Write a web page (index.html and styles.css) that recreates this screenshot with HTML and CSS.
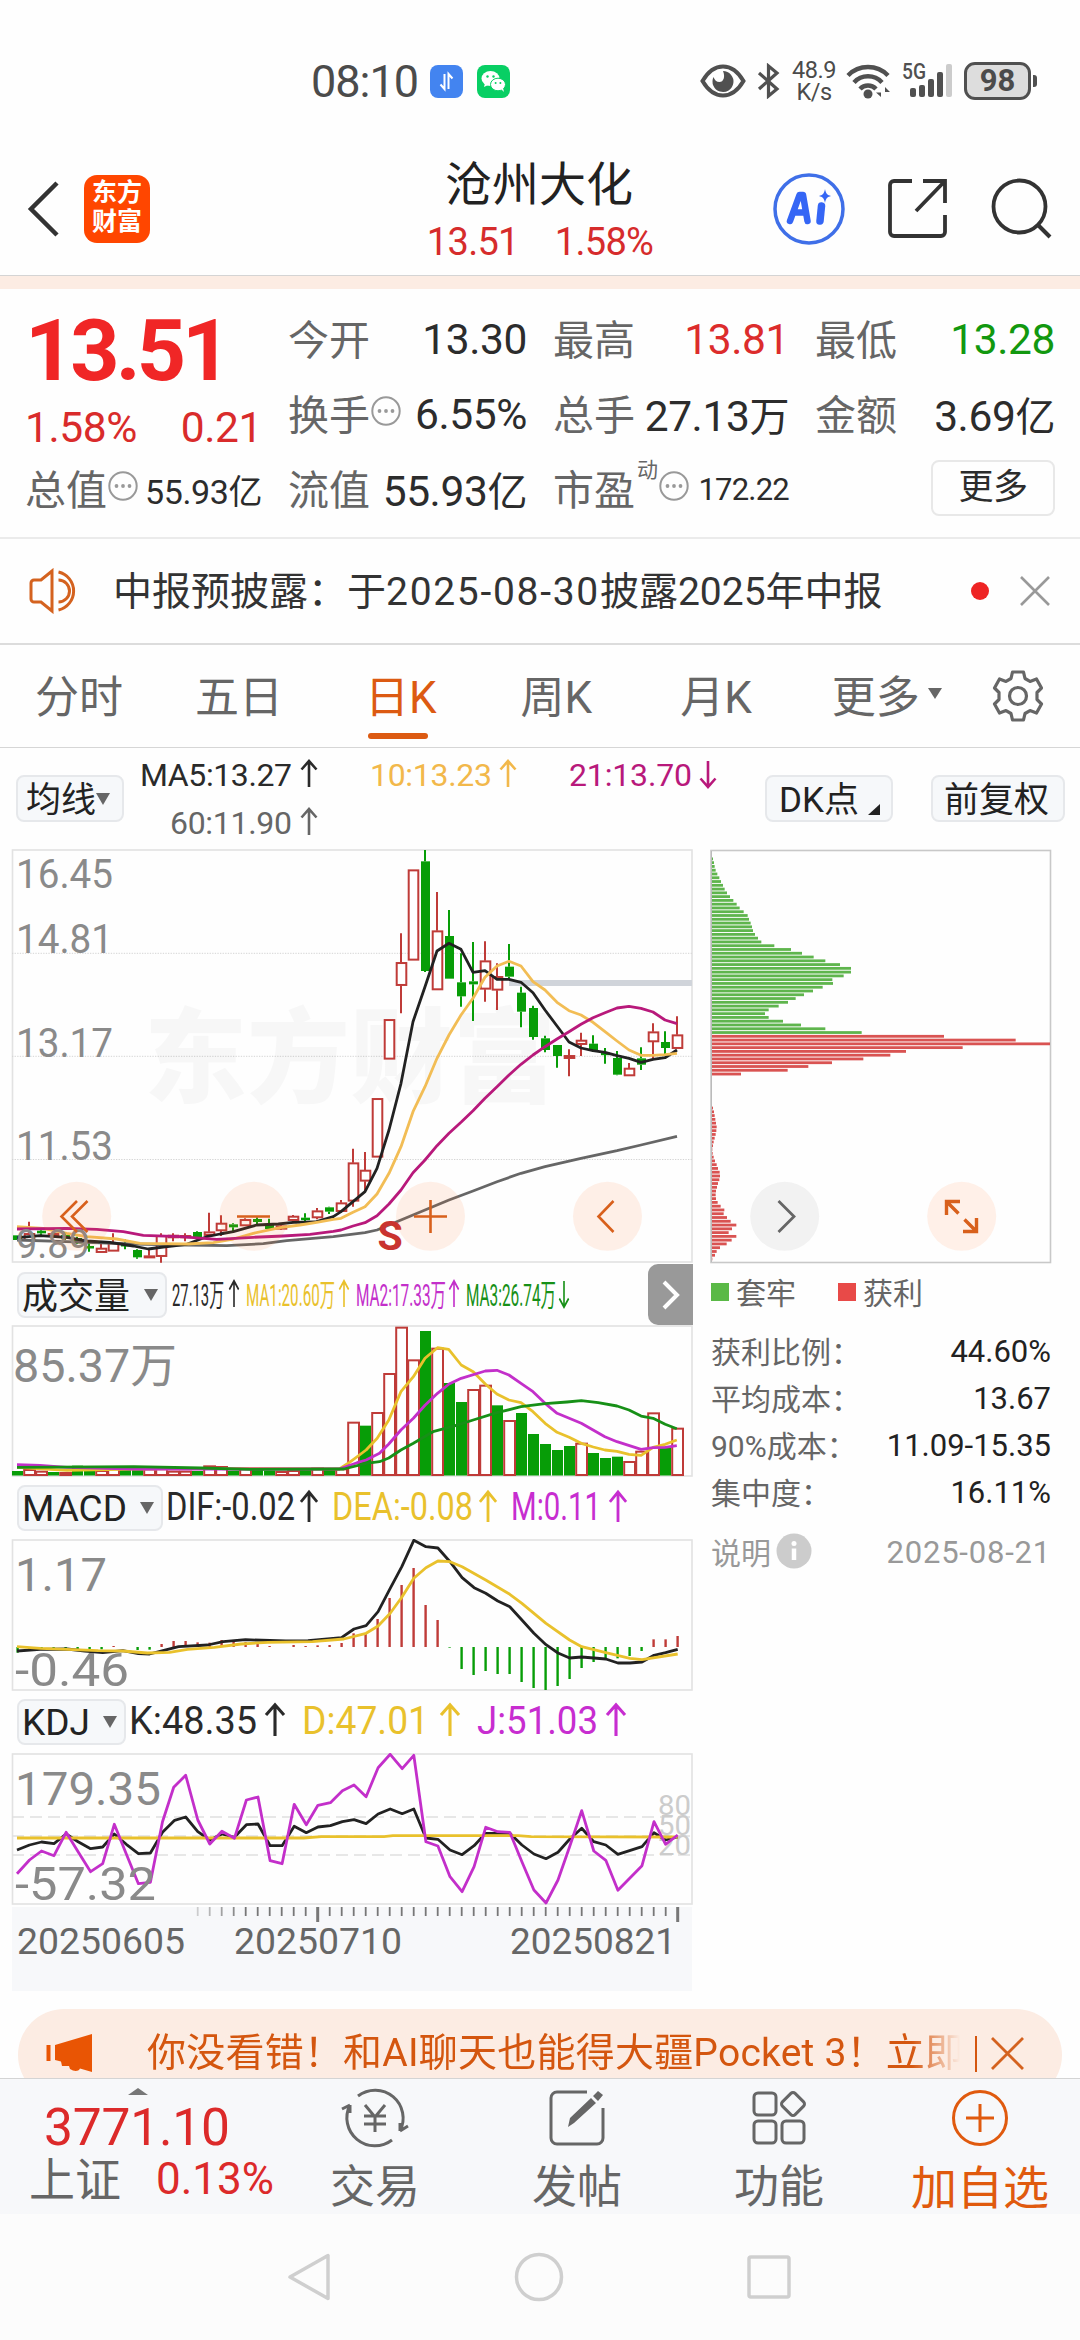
FILE: index.html
```html
<!DOCTYPE html>
<html lang="zh-CN">
<head>
<meta charset="utf-8">
<title>沧州大化</title>
<link rel="stylesheet" href="styles.css">
</head>
<body>
<svg class="defs" width="0" height="0">
  <defs>
    <path id="up" d="M0 0V-26M-7.5 -17.5L0 -26L7.5 -17.5" fill="none" stroke-width="2.6"/>
    <path id="down" d="M0 -26V0M-7.5 -8.5L0 0L7.5 -8.5" fill="none" stroke-width="2.6"/>
    <g id="dots"><circle cx="15" cy="15" r="13.7" fill="none" stroke="#999" stroke-width="2"/><circle cx="8.5" cy="15" r="1.9" fill="#999"/><circle cx="15" cy="15" r="1.9" fill="#999"/><circle cx="21.5" cy="15" r="1.9" fill="#999"/></g>
  </defs>
</svg>

<div class="status">
  <span class="clock">08:10</span>
  <svg class="app" width="33" height="33" viewBox="0 0 33 33"><rect width="33" height="33" rx="8" fill="#4384f0"/><path d="M14.5 9v15l-4-4.5M18.5 24V9l4 4.5" fill="none" stroke="#fff" stroke-width="2"/></svg>
  <svg class="app2" width="33" height="33" viewBox="0 0 33 33"><rect width="33" height="33" rx="8" fill="#08cf64"/><ellipse cx="13.5" cy="13.5" rx="9" ry="7.5" fill="#fff"/><path d="M8 18l-1 4 4-2z" fill="#fff"/><ellipse cx="21" cy="19.5" rx="7.5" ry="6.3" fill="#fff" stroke="#08cf64"/><path d="M24 24l3 3-1-4z" fill="#fff"/><circle cx="10.5" cy="11.5" r="1.2" fill="#08cf64"/><circle cx="16.5" cy="11.5" r="1.2" fill="#08cf64"/><circle cx="18.6" cy="18" r="1" fill="#08cf64"/><circle cx="23.4" cy="18" r="1" fill="#08cf64"/></svg>
  <span class="grow"></span>
  <svg width="46" height="34" viewBox="0 0 46 34"><path d="M2.5 17C9 6 16 2.5 23 2.5S37 6 43.5 17C37 28 30 31.5 23 31.5S9 28 2.5 17z" fill="none" stroke="#505050" stroke-width="4"/><path d="M23 7a10.5 10.5 0 1 1-9.5 6c1 3 3 5 6 5 4 0 6-5 3.500-11z" fill="#505050"/></svg>
  <svg class="bt" width="24" height="36" viewBox="0 0 24 36"><path d="M2 10L20 26L11.500 33V3L20 10L2 26" fill="none" stroke="#505050" stroke-width="3.200"/></svg>
  <span class="rate">48.9<br>K/s</span>
  <svg class="wifi" width="46" height="36" viewBox="0 0 46 36"><g fill="none" stroke="#505050" stroke-width="4.500"><path d="M2 12.500a28 28 0 0 1 40 0"/><path d="M8 19.500a19 19 0 0 1 28 0"/><path d="M14 26a11 11 0 0 1 16 0"/></g><circle cx="22" cy="31" r="4.500" fill="#505050"/><path d="M35 24v10l-5-4.500h5M39 34V24l5 5h-5" fill="#505050"/></svg>
  <svg class="sig" width="52" height="36" viewBox="0 0 52 36"><text x="0" y="16" font-size="22" textLength="24" lengthAdjust="spacingAndGlyphs" fill="#505050" font-weight="500">5G</text><g fill="#505050"><rect x="8" y="25" width="6" height="9" rx="2"/><rect x="17" y="22" width="6" height="12" rx="2"/><rect x="26" y="16" width="6" height="18" rx="2"/><rect x="35" y="9" width="6" height="25" rx="2"/><rect x="44" y="1" width="6" height="33" rx="2" fill="#ccc"/></g></svg>
  <span class="battery">98</span><i class="nub"></i>
</div>

<header class="header">
  <svg class="back" width="34" height="58" viewBox="0 0 34 58"><path d="M30 3L4 29L30 55" fill="none" stroke="#333" stroke-width="4.500"/></svg>
  <div class="logo">东方<br>财富</div>
  <div class="title"><div class="name">沧州大化</div><div class="sub"><span>13.51</span><span>1.58%</span></div></div>
  <svg width="72" height="72" viewBox="0 0 72 72"><circle cx="36" cy="36" r="34" fill="none" stroke="#3f6fe8" stroke-width="3.500"/><path d="M17 48L26.500 22H30L34.500 48M21 39.500H32" fill="none" stroke="#3566f5" stroke-width="6.500" stroke-linejoin="round" stroke-linecap="round"/><path d="M48.500 33L47 48" stroke="#3566f5" stroke-width="7.500" stroke-linecap="round"/><path d="M52 16c1 5 2.500 6 6 7c-3.500 1-5 2-6 7c-1-5-2.500-6-6-7c3.500-1 5-2 6-7z" fill="#3566f5"/></svg>
  <svg class="share" width="62" height="62" viewBox="0 0 62 62"><g fill="none" stroke="#333" stroke-width="3.800"><path d="M25 3H7a4 4 0 0 0-4 4V54a4 4 0 0 0 4 4H54a4 4 0 0 0 4-4V37"/><path d="M36 3H58V25M58 3L29 33"/></g></svg>
  <svg class="search" width="62" height="62" viewBox="0 0 62 62"><circle cx="28.500" cy="28.500" r="26" fill="none" stroke="#333" stroke-width="3.800"/><path d="M47 47L59 59" stroke="#333" stroke-width="4"/></svg>
</header>
<div class="band"></div>

<section class="quote">
  <div class="main"><div class="price">13.51</div><div class="chg"><span>1.58%</span><span>0.21</span></div></div>
  <div class="c"><b>今开</b><span>13.30</span></div>
  <div class="c"><b>最高</b><span class="red">13.81</span></div>
  <div class="c"><b>最低</b><span class="green">13.28</span></div>
  <div class="c"><b>换手</b><svg width="30" height="30"><use href="#dots"/></svg><span>6.55%</span></div>
  <div class="c"><b>总手</b><span>27.13<u>万</u></span></div>
  <div class="c"><b>金额</b><span>3.69<u>亿</u></span></div>
  <div class="c"><b>总值</b><svg width="30" height="30"><use href="#dots"/></svg><span class="small">55.93亿</span></div>
  <div class="c"><b>流值</b><span>55.93<u>亿</u></span></div>
  <div class="c"><b>市盈</b><sup>动</sup><svg width="30" height="30"><use href="#dots"/></svg><span class="tiny">172.22</span></div>
  <div class="c"><span class="more">更多</span></div>
</section>

<section class="notice">
  <svg width="52" height="46" viewBox="0 0 52 46"><g fill="none" stroke="#d4621f" stroke-width="3"><path d="M23 3V43L12 34H5a3 3 0 0 1-3-3V15a3 3 0 0 1 3-3h7z"/><path d="M29.500 12a11 11 0 0 1 0 22"/><path d="M29.500 4a19.500 19.500 0 0 1 0 38"/></g></svg>
  <span class="ntext">中报预披露：于<span class="d">2025-08-30</span>披露2025年中报</span>
  <i class="reddot"></i>
  <svg width="30" height="30" viewBox="0 0 30 30"><path d="M1 1L29 29M29 1L1 29" stroke="#999" stroke-width="2.600"/></svg>
</section>

<nav class="tabs">
  <span>分时</span><span>五日</span><span class="on">日K</span><span>周K</span><span>月K</span><span class="mt">更多<svg width="14" height="11"><path d="M0 0H14L7 11z" fill="#666"/></svg></span>
  <svg class="gear" width="52" height="54" viewBox="-26 -27 52 54"><path d="M-5.500 -24H5.500L7 -17.500L12 -14.600L18.500 -17L23.500 -8L19 -3.500V3.500L23.500 8L18.500 17L12 14.600L7 17.500L5.500 24H-5.500L-7 17.500L-12 14.600L-18.500 17L-23.500 8L-19 3.500V-3.500L-23.500 -8L-18.500 -17L-12 -14.600L-7 -17.500z" fill="none" stroke="#666" stroke-width="3.200" stroke-linejoin="round"/><circle r="8.500" fill="none" stroke="#666" stroke-width="3.200"/></svg>
</nav>

<section class="marow">
  <span class="chip c1"><span>均线</span><svg width="14" height="12"><path d="M0 0H14L7 12z" fill="#666"/></svg></span>
  <svg class="malegend" width="600" height="102" viewBox="130 748 600 102" font-size="32">
    <g fill="#2a2a2a"><text x="140" y="786" textLength="152">MA5:13.27</text><use href="#up" x="309" y="787" stroke="#2a2a2a"/></g>
    <g fill="#f2b84b"><text x="370" y="786" textLength="122">10:13.23</text><use href="#up" x="508" y="787" stroke="#f2b84b"/></g>
    <g fill="#b8197b"><text x="569" y="786" textLength="123">21:13.70</text><use href="#down" x="708" y="787" stroke="#b8197b"/></g>
    <g fill="#666"><text x="170" y="834" textLength="122">60:11.90</text><use href="#up" x="309" y="835" stroke="#666"/></g>
  </svg>
  <span class="chip c2"><span>DK点</span><svg width="12" height="11"><path d="M12 0V11H0z" fill="#222"/></svg></span>
  <span class="chip c3"><span>前复权</span></span>
</section>

<main class="charts">
  <div class="left">
    <div class="stage">
      <svg id="kline" width="682" height="415" viewBox="11 849 682 415"></svg>
    </div>
    <div class="ind vol">
      <span class="chip"><span>成交量</span><svg width="14" height="12"><path d="M0 0H14L7 12z" fill="#666"/></svg></span>
      <svg class="leg" width="420" height="46" viewBox="168 1272 420 46" font-size="31">
        <text x="172" y="1306" textLength="52" lengthAdjust="spacingAndGlyphs" fill="#2a2a2a">27.13万</text><use href="#up" x="0" y="0" transform="translate(234 1307) scale(.62 1)" stroke="#2a2a2a"/>
        <text x="246" y="1306" textLength="89" lengthAdjust="spacingAndGlyphs" fill="#e9c12c">MA1:20.60万</text><use href="#up" transform="translate(344 1307) scale(.62 1)" stroke="#e9c12c"/>
        <text x="356" y="1306" textLength="90" lengthAdjust="spacingAndGlyphs" fill="#c32fca">MA2:17.33万</text><use href="#up" transform="translate(454 1307) scale(.62 1)" stroke="#c32fca"/>
        <text x="466" y="1306" textLength="90" lengthAdjust="spacingAndGlyphs" fill="#179017">MA3:26.74万</text><use href="#down" transform="translate(564 1307) scale(.62 1)" stroke="#179017"/>
      </svg>
      <span class="expand"><svg width="20" height="32" viewBox="0 0 20 32"><path d="M3 3L16 16L3 29" fill="none" stroke="#fff" stroke-width="4"/></svg></span>
    </div>
    <svg id="vol" width="682" height="152" viewBox="11 1325 682 152"></svg>
    <div class="ind macd">
      <span class="chip"><span>MACD</span><svg width="14" height="12"><path d="M0 0H14L7 12z" fill="#666"/></svg></span>
      <svg class="leg" width="480" height="46" viewBox="164 1486 480 46" font-size="39">
        <text x="166" y="1521" textLength="129" lengthAdjust="spacingAndGlyphs" fill="#2a2a2a">DIF:-0.02</text><use href="#up" transform="translate(309 1523) scale(1.080 1.150)" stroke="#2a2a2a"/>
        <text x="332" y="1521" textLength="141" lengthAdjust="spacingAndGlyphs" fill="#e9c12c">DEA:-0.08</text><use href="#up" transform="translate(488 1523) scale(1.080 1.150)" stroke="#e9c12c"/>
        <text x="511" y="1521" textLength="90" lengthAdjust="spacingAndGlyphs" fill="#c72dd0">M:0.11</text><use href="#up" transform="translate(618 1523) scale(1.080 1.150)" stroke="#c72dd0"/>
      </svg>
    </div>
    <svg id="macd" width="682" height="152" viewBox="11 1539 682 152"></svg>
    <div class="ind kdj">
      <span class="chip"><span>KDJ</span><svg width="14" height="12"><path d="M0 0H14L7 12z" fill="#666"/></svg></span>
      <svg class="leg" width="510" height="46" viewBox="127 1700 510 46" font-size="39">
        <text x="129" y="1735" textLength="128" lengthAdjust="spacingAndGlyphs" fill="#2a2a2a">K:48.35</text><use href="#up" transform="translate(275 1737) scale(1.200 1.200)" stroke="#2a2a2a"/>
        <text x="302" y="1735" textLength="127" lengthAdjust="spacingAndGlyphs" fill="#e9c12c">D:47.01</text><use href="#up" transform="translate(450 1737) scale(1.200 1.200)" stroke="#e9c12c"/>
        <text x="477" y="1735" textLength="121" lengthAdjust="spacingAndGlyphs" fill="#c72dd0">J:51.03</text><use href="#up" transform="translate(616 1737) scale(1.200 1.200)" stroke="#c72dd0"/>
      </svg>
    </div>
    <svg id="kdj" width="682" height="152" viewBox="11 1753 682 152"></svg>
    <svg id="axis" width="680" height="84" viewBox="12 1907 680 84"></svg>
  </div>
  <aside class="right">
    <svg id="chips" width="342" height="415" viewBox="710 849 342 415"></svg>
    <div class="keys"><i class="kg"></i><span>套牢</span><i class="kr"></i><span>获利</span></div>
    <div class="stat"><span>获利比例：</span><b>44.60%</b></div>
    <div class="stat"><span>平均成本：</span><b>13.67</b></div>
    <div class="stat"><span>90%成本：</span><b class="range">11.09-15.35</b></div>
    <div class="stat"><span>集中度：</span><b>16.11%</b></div>
    <div class="stat note"><span>说明</span><svg width="36" height="36"><circle cx="18" cy="18" r="17.500" fill="#ccc"/><circle cx="18" cy="10.500" r="2.500" fill="#fff"/><path d="M18 15.500V27" stroke="#fff" stroke-width="4.500"/></svg><b>2025-08-21</b></div>
  </aside>
</main>

<div class="bannerwrap"><div class="banner">
  <svg width="48" height="40" viewBox="0 0 48 40"><path d="M9 12L46 1V39L34 35.500C32 39 28 38.500 24 36L23 33L16 33L15 28.500L9 27z" fill="#e95504"/><path d="M2.500 12V28" stroke="#e95504" stroke-width="4"/></svg>
  <span class="btext">你没看错！和AI聊天也能得大疆Pocket 3！立即</span>
  <i class="bar"></i>
  <svg width="33" height="33" viewBox="0 0 33 33"><path d="M1 1L32 32M32 1L1 32" stroke="#d4621f" stroke-width="2.800"/></svg>
</div></div>

<footer class="bottom">
  <div class="index"><svg width="20" height="7"><path d="M10 0L20 7H0z" fill="#777"/></svg><div class="pts">3771.10</div><div class="sz"><span>上证</span><em>0.13%</em></div></div>
  <div class="act"><svg width="68" height="60" viewBox="-34 -30 68 60"><g fill="none" stroke="#666" stroke-width="3"><path d="M-17 -22A28 28 0 0 1 25 13M25 13L33 8M25 13V5"/><path d="M17 22A28 28 0 0 1 -25 -13M-25 -13L-33 -9M-25 -13V-5"/><path d="M-10 -13L0 -1L10 -13M0 -1V14M-11 -2H11M-11 6H11"/></g></svg><span>交易</span></div>
  <div class="act"><svg width="58" height="60" viewBox="-29 -30 58 60"><path d="M10 -26H-20a6 6 0 0 0-6 6V20a6 6 0 0 0 6 6H20a6 6 0 0 0 6-6V-10" fill="none" stroke="#666" stroke-width="3"/><path d="M-9 9L-7 0L14 -20L19 -15L-3 5zM16 -22L21 -27L26 -23L21 -17z" fill="#666"/></svg><span>发帖</span></div>
  <div class="act"><svg width="58" height="60" viewBox="-29 -30 58 60"><g fill="none" stroke="#666" stroke-width="3"><rect x="-25" y="-25" width="22" height="22" rx="4"/><rect x="-25" y="3" width="22" height="22" rx="4"/><rect x="3" y="3" width="22" height="22" rx="4"/><rect x="5" y="-23" width="18" height="18" rx="3" transform="rotate(45 14 -14)"/></g></svg><span>功能</span></div>
  <div class="act add"><svg width="60" height="60" viewBox="-30 -30 60 60"><circle r="26.500" fill="none" stroke="#e05a0e" stroke-width="3"/><path d="M-14 0H14M0 -14V14" stroke="#e05a0e" stroke-width="3"/></svg><span>加自选</span></div>
</footer>
<div class="sysnav">
  <svg width="46" height="50" viewBox="0 0 46 50"><path d="M42 3.500V46.500L4 25z" fill="none" stroke="#cfcfcf" stroke-width="3.500" stroke-linejoin="round"/></svg>
  <svg width="50" height="50" viewBox="0 0 50 50"><circle cx="25" cy="25" r="22.500" fill="none" stroke="#cfcfcf" stroke-width="3.500"/></svg>
  <svg width="46" height="50" viewBox="0 0 46 50"><rect x="3" y="5" width="40" height="40" rx="2" fill="none" stroke="#cfcfcf" stroke-width="3.500"/></svg>
</div>
<script src="chart.js"></script>
</body>
</html>
```
FILE: styles.css
```css
* { box-sizing: border-box; }
body { margin: 0; width: 1080px; height: 2340px; overflow: hidden; background: #fefefe; color: #2c2c2c; font-family: Roboto, "Noto Sans CJK SC", sans-serif; }
svg { display: block; flex: none; }
svg text { font-family: Roboto, "Noto Sans CJK SC", sans-serif; }
.defs { position: absolute; }
.grow { flex: 1; }
i, b, u, em { font-style: normal; font-weight: 400; text-decoration: none; }
span { white-space: nowrap; }

.status { height: 162px; display: flex; align-items: center; padding: 0 43px 0 311px; color: #4b4b4b; }
.clock { font-size: 45px; letter-spacing: -1px; width: 119px; }
.app2 { margin-left: 14px; }
.bt { margin-left: 11px; }
.rate { width: 46px; margin-left: 10px; font-size: 23.5px; line-height: 22px; text-align: center; letter-spacing: -.5px; }
.wifi { margin-left: 9px; }
.sig { margin-left: 10px; }
.battery { width: 67px; height: 38px; margin-left: 10px; border: 3px solid #505050; border-radius: 11px; background: #ddd; font-size: 31px; font-weight: 700; line-height: 32px; text-align: center; }
.nub { width: 4px; height: 12px; margin-left: 2px; background: #505050; border-radius: 0 3px 3px 0; }

.header { height: 113px; display: flex; align-items: center; padding: 0 27px 20px 27px; }
.logo { width: 67px; height: 68px; margin: 0 0 0 23px; border-radius: 13px; background: #ff4600; color: #fff; font-size: 25px; font-weight: 700; line-height: 29px; padding-top: 3px; text-align: center; }
.title { width: 619px; flex: none; margin: 6px 4px 0 0; padding: 0 35px 0 194px; text-align: center; }
.name { font-size: 47px; line-height: 60px; color: #222; }
.sub { display: flex; justify-content: center; gap: 36px; padding-left: 2px; font-size: 38px; line-height: 54px; letter-spacing: -.7px; color: #d62c2c; }
.share { margin-left: 42px; }
.search { margin-left: 42px; }
.band { height: 14px; background: #fcece3; border-top: 1px solid #d4d4d4; }

.quote { height: 250px; display: grid; grid-template-columns: 237px 239px 236px 240px; grid-template-rows: 75px 75px 75px; column-gap: 26px; padding: 12px 0 0 25px; border-bottom: 2px solid #ebebeb; }
.main { grid-row: span 2; color: #d92b2b; padding-top: 8px; }
.price { font-size: 86px; font-weight: 700; line-height: 84px; letter-spacing: -4px; color: #f02626; }
.chg { display: flex; justify-content: space-between; font-size: 42.5px; line-height: 70px; letter-spacing: -.4px; }
.c { display: flex; align-items: center; }
.c b { font-size: 41px; color: #666; margin-bottom: 4px; }
.c svg { margin: -6px 0 0 1px; }
.c span { margin-left: auto; font-size: 42.5px; letter-spacing: -.4px; margin-top: 1px; }
.c u { font-size: 40px; }
.c .small { font-size: 34px; }
.c .tiny { font-size: 31px; letter-spacing: -.8px; }
.c sup { font-size: 21px; line-height: 20px; color: #666; margin: -38px 0 0 2px; }
.c .red { color: #dc2c2c; }
.c .green { color: #12980f; }
.c .more { width: 124px; height: 56px; border: 2px solid #e8e8e8; border-radius: 8px; font-size: 35px; line-height: 51px; text-align: center; margin-top: -2px; }

.notice { height: 106px; display: flex; align-items: center; padding: 0 30px 1px 29px; border-bottom: 2px solid #dcdcdc; }
.ntext { margin: -6px 0 0 32px; font-size: 39px; color: #333; }
.d { letter-spacing: 1.7px; }
.reddot { width: 18px; height: 18px; border-radius: 9px; background: #ee2424; margin: 0 31px 0 auto; }

.tabs { height: 103px; display: flex; align-items: center; font-size: 44px; color: #666; padding: 0 0 5px 35px; border-bottom: 1px solid #d6d6d6; }
.tabs span:nth-child(2) { margin-left: 72px; }
.tabs span:nth-child(3) { margin-left: 82px; }
.tabs span:nth-child(4) { margin-left: 84px; }
.tabs span:nth-child(5) { margin-left: 88px; }
.tabs span:nth-child(6) { margin-left: 80px; }
.tabs .mt { display: flex; align-items: center; gap: 8px; }
.gear { margin: 5px 0 0 50px; }
.tabs .on { color: #dc5a12; position: relative; }
.tabs .on::after { content: ""; position: absolute; left: 3px; width: 60px; bottom: -13px; height: 6px; border-radius: 3px; background: #dc5a12; }

.marow { height: 101px; display: flex; align-items: center; padding-left: 16px; }
.chip { display: flex; align-items: center; flex: none; height: 47px; border: 2px solid #e6e8eb; border-radius: 8px; background: #f6f8fa; color: #222; }
.chip span { margin-top: -4px; }
.marow .chip { font-size: 35px; }
.c1 { width: 108px; padding-left: 8px; }
.malegend { margin-left: 6px; }
.c2 { width: 128px; padding-left: 12px; margin-left: 35px; }
.c2 svg { margin: 22px 0 0 9px; }
.c3 { width: 134px; margin-left: 38px; padding-left: 11px; }

.charts { display: flex; height: 1142px; }
.left { width: 682px; margin-left: 11px; }
.stage { height: 415px; }
.ind { height: 62px; display: flex; align-items: center; padding-left: 6px; }
.ind .chip { height: 46px; font-size: 36px; padding: 0 7px 0 3px; justify-content: space-between; }
.vol { height: 61px; }
.vol .chip { width: 150px; }
.macd .chip { width: 146px; font-size: 37px; }
.kdj .chip { width: 109px; font-size: 37px; }
.macd .chip span, .kdj .chip span { margin-top: 0; }
.leg { margin-left: 1px; }
.expand { width: 45px; height: 61px; margin-left: auto; background: #999; border-radius: 10px 0 0 10px; display: flex; align-items: center; justify-content: center; }
#axis { margin: 2px 0 0 1px; background: #f7f8fa; }
.right { width: 342px; margin-left: 17px; }
.keys { height: 62px; display: flex; align-items: center; font-size: 30px; color: #666; padding: 0 0 6px 1px; }
.keys span { margin-top: -2px; }
.keys i { width: 18px; height: 18px; margin-right: 7px; background: #5ab946; }
.keys .kr { background: #e84a48; margin-left: 42px; }
.stat { height: 47px; display: flex; align-items: center; font-size: 30px; color: #666; padding: 0 1px 0 1px; }
.stat b { margin: 3px 0 0 auto; font-size: 31px; color: #222; }
.stat .range { font-size: 31px; }
.note { color: #999; height: 73px; }
.note svg { margin-left: 5px; }
.note b { color: #999; font-size: 31px; letter-spacing: .8px; }

.bannerwrap { height: 87px; padding: 18px 18px 0; overflow: hidden; }
.banner { height: 92px; border-radius: 46px; background: #fcece3; display: flex; align-items: flex-start; padding: 24px 38px 0 28px; color: #d4560f; }
.btext { flex: none; width: 813px; margin: -7px 0 0 53px; font-size: 39px; line-height: 54px; letter-spacing: .22px; overflow: hidden; -webkit-mask-image: linear-gradient(90deg, #000 765px, transparent 813px); mask-image: linear-gradient(90deg, #000 765px, transparent 813px); }
.bar { width: 2px; height: 36px; margin: 3px 0 0 15px; background: #d4560f; }
.banner > svg:last-child { margin: 4px 0 0 auto; }

.bottom { height: 136px; background: #f7f8fa; border-top: 1px solid #d4d4d4; display: flex; color: #666; }
.index { width: 274px; padding: 9px 0 0 29px; color: #dc2a2a; }
.index > svg { margin-left: 99px; }
.pts { font-size: 51.5px; line-height: 66px; margin: 0 0 0 15px; letter-spacing: -.2px; }
.sz { display: flex; justify-content: space-between; align-items: center; margin-top: -6px; font-size: 46px; line-height: 50px; }
.sz span { color: #666; }
.sz em { font-size: 44px; letter-spacing: 0; margin-top: -3px; }
.act { width: 202px; display: flex; flex-direction: column; align-items: center; padding-top: 9px; font-size: 45px; }
.act span { line-height: 80px; }
.add { color: #e05a0e; font-size: 46px; width: 200px; }
.sysnav { height: 126px; background: #fcfcfc; display: flex; align-items: center; padding: 0 288px 0 286px; justify-content: space-between; }
```
FILE: chart.js
```js
const NS = 'http://www.w3.org/2000/svg';
const RED = '#bf3b38', GREEN = '#079d07';
const X = i => 17 + 12 * i;

function el(parent, tag, attrs, text) {
  const e = document.createElementNS(NS, tag);
  for (const k in attrs) e.setAttribute(k, attrs[k]);
  if (text) e.textContent = text;
  parent.appendChild(e);
  return e;
}
function line(svg, pts, color, sx, sy, oy, w = 2.8) {
  const p = [];
  for (let i = 0; i < pts.length; i += 2) p.push((pts[i] * sx).toFixed(1) + ',' + (oy + pts[i + 1] * sy).toFixed(1));
  el(svg, 'polyline', { points: p.join(' '), fill: 'none', stroke: color, 'stroke-width': w, 'stroke-linejoin': 'round' });
}
function label(svg, x, y, size, len, text, color = '#8a8a8a') {
  el(svg, 'text', { x, y, 'font-size': size, fill: color, textLength: len, lengthAdjust: 'spacingAndGlyphs' }, text);
}
function frame(svg, x, y, w, h, color = '#e2e2e2') {
  el(svg, 'rect', { x, y, width: w, height: h, fill: 'none', stroke: color, 'stroke-width': 1.6 });
}

/* daily candles */
const k = document.getElementById('kline');
frame(k, 12.5, 850, 679.5, 412);
for (const y of [953.3, 1056.3, 1159.5]) el(k, 'path', { d: `M12 ${y}H692`, stroke: '#d4d4d4', 'stroke-dasharray': '1.3 1.3', 'stroke-width': 1 });
el(k, 'text', { x: 144, y: 1095, 'font-size': 103, 'font-weight': 900, fill: '#000', opacity: .025, textLength: 412, lengthAdjust: 'spacingAndGlyphs' }, '东方财富');
el(k, 'rect', { x: 509, y: 980, width: 183, height: 6, fill: '#d0d4da' });
const candles = `g 1186 1186 1200 1200|r 1145 1180 1202 1202|g 1170 1172 1180 1188|r 1176 1180 1190 1194|g 1180 1185 1196 1200|g 1190 1194 1210 1212|g 1205 1218 1224 1235|r 1207 1224 1238 1238|r 1180 1208 1234 1234|g 1198 1212 1218 1228|g 1228 1230 1252 1256|r 1225 1247 1252 1252|r 1180 1186 1250 1268|r 1180 1185 1194 1204|r 1180 1186 1194 1204|g 1174 1176 1192 1192|r 1118 1175 1187 1190|r 1126 1149 1173 1188|g 1150 1153 1162 1174|r 1135 1138 1158 1158|g 1132 1137 1146 1152|g 1136 1155 1167 1170|r 1153 1157 1168 1170|r 1125 1128 1142 1150|g 1120 1133 1140 1148|r 1104 1112 1134 1138|g 1100 1102 1115 1122|r 1080 1088 1115 1118|r 926 968 1084 1100|r 936 990 1024 1056|r 775 775 952 952|r 538 538 658 658|r 280 367 437 520|r 89 89 361 361|g 30 64 393 396|r 156 272 450 450|g 210 288 416 416|g 340 427 469 500|g 306 424 433 543|r 304 362 448 485|r 370 409 451 510|g 312 380 410 415|g 440 458 515 562|g 497 504 591 599|g 587 595 630 637|g 615 615 648 683|r 628 646 656 709|r 578 600 614 648|g 586 611 632 636|g 624 638 643 671|g 633 654 704 706|r 669 684 708 708|g 622 655 674 690|r 550 575 606 655|g 574 606 624 642|r 529 584 626 626`.split('|');
candles.forEach((row, i) => {
  const [c, ...v] = row.split(' ');
  const [h, t, b, l] = v.map(n => 840 + n / 3);
  const x = X(i), col = c === 'r' ? RED : GREEN;
  el(k, 'path', { d: `M${x} ${h}V${t}M${x} ${b}V${l}`, stroke: col, 'stroke-width': 2 });
  if (c === 'r') el(k, 'rect', { x: x - 4.3, y: t + .7, width: 9.6, height: Math.max(b - t - 1.4, 1), fill: '#fff', stroke: col, 'stroke-width': 2 });
  else el(k, 'rect', { x: x - 4, y: t, width: 9, height: Math.max(b - t, 2.5), fill: col });
});
const series = (head, tail) => head.concat(...tail.map((v, j) => [51 + 36 * (27 + j), v]));
line(k, [51,1200,200,1205,400,1212,560,1215,680,1217,790,1211,860,1202,1000,1190,1095,1178,1131,1170,1167,1155,1239,1125,1347,1080,1419,1053,1491,1025,1563,1000,1635,980,1743,955,1851,932,1923,915,2031,889], '#666', 1/3, 1/3, 840);
line(k, series([51,1193,120,1187,200,1192,260,1203,330,1207,400,1218,445,1227,490,1221,560,1213,620,1190,660,1182,700,1175,770,1155,835,1152,880,1147,945,1146,1000,1130], [1115,1085,1055,985,870,730,545,440,333,310,328,397,392,418,418,427,458,510,558,606,624,632,637,647,655,667,658,653,630]), '#222', 1/3, 1/3, 840);
line(k, series([51,1160,130,1165,200,1180,260,1190,350,1197,420,1210,560,1212,640,1208,700,1197,760,1180,840,1163,900,1155,950,1147,1000,1138], [1135,1117,1100,1062,1000,920,815,740,655,585,525,475,412,378,364,378,425,450,487,512,525,547,575,603,630,646,646,644,640]), '#f2bd55', 1/3, 1/3, 840);
line(k, series([51,1167,200,1165,290,1168,370,1175,430,1186,540,1190,650,1198,760,1192,850,1188,930,1183,1000,1174], [1170,1158,1148,1127,1092,1050,998,960,917,880,847,812,775,740,705,673,645,620,597,575,553,533,518,504,499,505,516,540,551]), '#b8197b', 1/3, 1/3, 840);
[[888, '16.45'], [953, '14.81'], [1057, '13.17'], [1160, '11.53']].forEach(([y, t]) => label(k, 16, y, 40, 97, t));
label(k, 16, 1258, 40, 74, '9.89');
el(k, 'text', { x: 377.5, y: 1250, 'font-size': 41, 'font-weight': 700, fill: '#c9332f' }, 'S');
for (const cx of [76.7, 253.7, 430.5, 607.5]) el(k, 'circle', { cx, cy: 1216.3, r: 34.5, fill: '#ff7a30', opacity: .11 });
el(k, 'path', { d: 'M77 1201L61.500 1216.500L77 1232M87.500 1201L72 1216.500L87.500 1232M237 1216.500H270M414 1216.500H447M430.500 1200V1233M613.500 1201L598.500 1216.500L613.500 1232', fill: 'none', stroke: '#d8601c', 'stroke-width': 2.6 });

/* volume */
const v = document.getElementById('vol');
frame(v, 12.5, 1326, 679.5, 150);
'g633 r627 r632 g636 r636 g617 g628 r630 r620 g625 g622 r625 r620 r632 r632 g633 r616 r618 g632 r622 g628 g632 r633 r630 g630 r622 g630 r625 r485 g497 r456 r339 r200 r298 g213 r263 g369 g426 r387 r374 g436 r480 g459 g522 g552 g570 g558 r548 g579 g594 g590 r603 r572 r457 g560 r503'.split(' ').forEach((s, i) => {
  const y = 1260 + s.slice(1) / 3, b = 1475, x = X(i);
  if (s[0] === 'r') el(v, 'rect', { x: x - 4.8, y: y + 1, width: 10.8, height: b - y - 1, fill: '#fff', stroke: RED, 'stroke-width': 2 });
  else el(v, 'rect', { x: x - 5, y, width: 11, height: b - y + .5, fill: GREEN });
});
line(v, [38,622,150,631,300,627,560,625,760,627,780,610,820,570,845,535,871,480,898,395,926,350,952,295,980,263,1005,268,1033,315,1060,335,1087,372,1113,402,1140,420,1167,428,1194,455,1221,490,1248,517,1275,532,1302,550,1329,561,1355,570,1382,574,1409,583,1436,586,1463,562,1490,553,1516,540], '#e9c12c', 1/2.24, 1/3, 1260);
line(v, [38,614,90,616,150,622,300,627,760,627,800,608,820,600,850,580,871,552,898,510,926,475,952,436,980,400,1006,372,1033,355,1087,333,1113,331,1140,345,1167,370,1194,395,1221,430,1248,460,1302,490,1355,530,1382,545,1436,568,1463,563,1490,562,1516,557], '#c32fca', 1/2.24, 1/3, 1260);
line(v, [38,622,300,620,450,624,560,628,770,627,820,610,850,605,871,594,898,570,926,550,970,515,1020,497,1060,480,1113,458,1167,440,1221,431,1270,426,1302,422,1340,428,1382,438,1409,450,1436,468,1463,475,1490,493,1516,506], '#179017', 1/2.24, 1/3, 1260);
label(v, 13, 1382, 47, 164, '85.37万');

/* MACD */
const m = document.getElementById('macd');
frame(m, 12.5, 1540, 679.5, 150);
[518,508,505,507,506,507,509,508,498,501,510,509,492,483,483,487,488,480,486,486,490,498,501,495,498,496,495,489,460,459,417,354,315,264,375,420,503,567,585,573,582,582,606,624,630,618,597,564,546,535,535,528,513,478,478,468].forEach((n, i) => {
  if (n !== 501) el(m, 'path', { d: `M${X(i) + .6} ${1647}V${1480 + n / 3}`, stroke: n < 501 ? RED : GREEN, 'stroke-width': 2.4 });
});
line(m, [38,513,90,508,150,507,190,513,230,518,275,512,310,521,335,522,365,512,400,500,465,495,500,485,550,479,640,483,690,482,765,473,793,447,820,437,847,395,874,325,900,260,927,181,954,200,981,204,1008,245,1035,293,1062,323,1088,340,1115,363,1142,380,1169,420,1196,460,1223,494,1250,519,1276,534,1303,531,1357,537,1384,549,1411,549,1438,546,1465,526,1491,518,1518,508], '#222', 1/2.24, 1/3, 1480);
line(m, [38,500,90,505,150,508,220,512,275,513,330,519,380,517,420,508,480,502,540,492,600,487,700,485,770,477,820,460,847,438,874,400,900,352,927,295,954,263,981,243,1008,245,1035,260,1088,300,1142,343,1169,370,1223,430,1276,480,1303,500,1357,518,1411,535,1438,539,1518,522], '#e9c12c', 1/2.24, 1/3, 1480);
label(m, 15, 1591, 47, 92, '1.17');
label(m, 15, 1685.5, 47, 114, '-0.46');

/* KDJ */
const d = document.getElementById('kdj');
frame(d, 12.5, 1754, 679.5, 150);
for (const y of [1817, 1836, 1855]) el(d, 'path', { d: `M12 ${y}H692`, stroke: '#e0e0e0', 'stroke-dasharray': '12 6', 'stroke-width': 1.6 });
[[1815, '80'], [1835, '50'], [1855, '20']].forEach(([y, t]) => label(d, 658, y, 28, 33, t, '#ccc'));
line(d, [38,450,66,435,93,426,121,431,148,402,175,425,203,446,230,441,256,402,283,433,310,461,337,459,364,397,391,361,416,351,443,395,470,420,497,402,525,412,552,374,578,372,605,437,632,437,659,379,686,398,712,381,740,377,767,365,793,359,820,371,847,342,874,327,901,341,927,327,954,414,981,418,1008,450,1035,464,1062,437,1088,400,1142,400,1169,435,1196,462,1223,476,1250,457,1276,418,1303,385,1330,425,1357,435,1384,463,1438,440,1465,398,1491,420,1518,411], '#222', 1/2.24, 1/3, 1700);
line(d, [38,414,680,414,720,410,860,410,880,407,1160,407,1190,410,1518,411], '#e9c12c', 1/2.24, 1/3, 1700);
line(d, [38,521,66,480,93,453,121,467,148,397,175,455,203,515,230,491,256,373,283,462,310,551,337,547,364,365,389,262,416,226,443,360,470,432,497,394,525,415,552,300,578,291,605,482,632,491,659,313,686,374,712,316,740,308,767,272,793,255,820,290,847,203,874,163,901,206,927,166,954,425,981,438,1008,530,1035,575,1062,500,1088,382,1115,395,1142,397,1169,485,1196,570,1223,609,1250,540,1276,440,1303,332,1330,453,1357,481,1384,571,1438,497,1465,365,1491,433,1518,405], '#c32fca', 1/2.24, 1/3, 1700);
label(d, 15, 1805, 47, 146, '179.35');
label(d, 15, 1900, 47, 141, '-57.32');

/* date axis */
const a = document.getElementById('axis');
for (let i = 15; i < 56; i++) {
  const big = i === 25 || i === 55;
  el(a, 'path', { d: `M${X(i) + .7} 1907V${big ? 1922 : 1916}`, stroke: '#777', 'stroke-width': big ? 3 : 1.8, opacity: Math.min(1, (i - 13) / 6) });
}
label(a, 17, 1954, 37.5, 168, '20250605', '#666');
label(a, 234, 1954, 37.5, 168, '20250710', '#666');
label(a, 510, 1954, 37.5, 166, '20250821', '#666');

/* cost distribution */
const c = document.getElementById('chips');
frame(c, 711, 850.5, 339.5, 412, '#c8c8c8');
[3,6,9,11,14,19,25,30,36,41,48,57,67,77,86,98,110,114,119,123,126,132,141,151,190,240,273,308,343,387,420,420,398,364,366,335,306,279,254,231,203,173,162,173,216,270,343,452,699,914,1017,755,585,538,457,363,292,230,90,0,0,0,0,0,0,3,3,6,9,11,13,15,17,16,14,11,8,6,4,5,8,12,17,21,26,27,25,21,18,15,14,15,20,29,40,38,48,59,76,63,53,76,62,47,27,17,12,4].forEach((n, i) => {
  if (n) el(c, 'rect', { x: 711, y: 853.7 + i * 3.775, width: n / 3, height: 2.8, fill: i < 48 ? '#5fb54d' : '#d95352' });
});
el(c, 'rect', { x: 711, y: 851, width: 1, height: 411, fill: '#bbb' });
el(c, 'circle', { cx: 784.7, cy: 1216.3, r: 34.5, fill: '#f2f2f2' });
el(c, 'circle', { cx: 961.7, cy: 1216.3, r: 34.5, fill: '#fff0e8' });
el(c, 'path', { d: 'M778.500 1201L794 1216.500L778.500 1232', fill: 'none', stroke: '#666', 'stroke-width': 2.8 });
el(c, 'path', { d: 'M960 1201.500H946.500V1215M947 1202L958.500 1213.500M964.500 1219.500L976 1231M963 1231.500H976.500V1218', fill: 'none', stroke: '#d8601c', 'stroke-width': 3.4 });
```
